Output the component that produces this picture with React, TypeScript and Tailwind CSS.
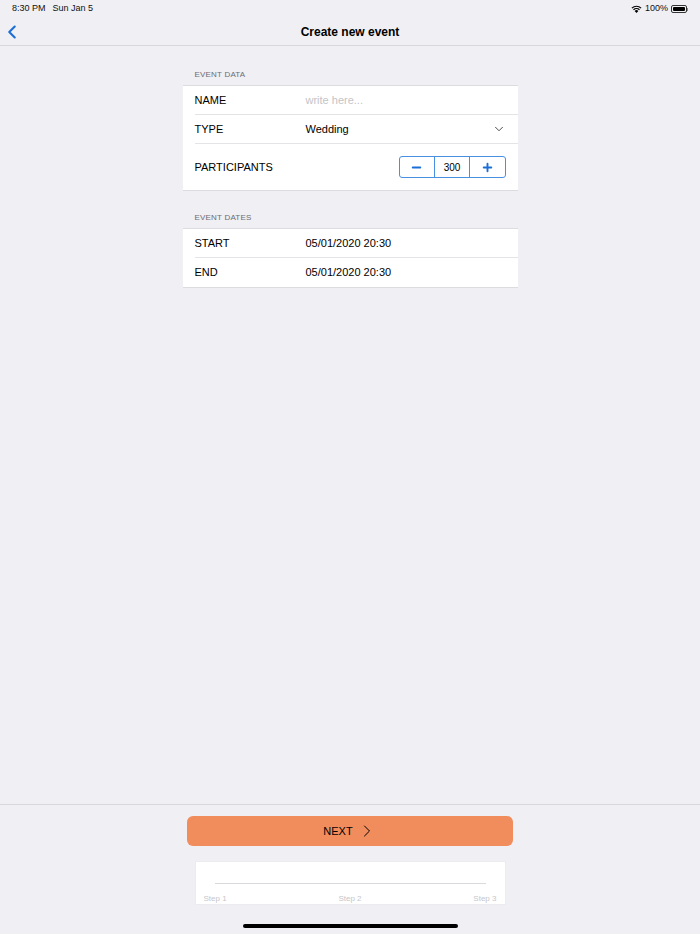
import { ChevronDown, ChevronLeft, ChevronRight, Minus, Plus } from 'lucide-react';

const font = { fontFamily: '"Liberation Sans", Arial, sans-serif' };

function SectionHeader({ title }: { title: string }) {
  return (
    <div className="h-[16px] px-3 pt-[1px] text-[8px] leading-[10px] text-[#6d6d72] tracking-[0.2px]">{title}</div>
  );
}

function Row({ label, children, last, tall }: { label: string; children?: React.ReactNode; last?: boolean; tall?: boolean }) {
  return (
    <div className="pl-3">
      <div className={`flex items-center pr-3 ${tall ? 'h-[46px]' : 'h-[29px]'} ${last ? '' : 'border-b border-[#e3e3e8]'}`}>
        <div className="w-[111px] text-[11px] text-black">{label}</div>
        <div className="flex flex-1 items-center">{children}</div>
      </div>
    </div>
  );
}

function Stepper({ value }: { value: number }) {
  return (
    <div className="ml-auto flex h-[22px] w-[107px] rounded-[3px] border border-[#4a90e2] bg-white">
      <div className="flex flex-1 items-center justify-center border-r border-[#4a90e2]">
        <Minus className="h-[13px] w-[13px] text-[#1b6ed6]" strokeWidth={3.5} />
      </div>
      <div className="flex flex-1 items-center justify-center border-r border-[#4a90e2] text-[10px] text-black">
        {value}
      </div>
      <div className="flex flex-1 items-center justify-center">
        <Plus className="h-[13px] w-[13px] text-[#1b6ed6]" strokeWidth={3.5} />
      </div>
    </div>
  );
}

function StatusBar() {
  return (
    <div className="flex h-[18px] items-center justify-between px-[12px] text-[9px] text-[#111]">
      <div className="flex gap-[7px]">
        <span>8:30 PM</span>
        <span>Sun Jan 5</span>
      </div>
      <div className="flex items-center gap-[3px]">
        <svg width="11" height="8" viewBox="0 0 11 8">
          <path d="M5.5 8 L3.6 5.9 A2.7 2.7 0 0 1 7.4 5.9 Z" fill="black" />
          <path d="M2.5 4.8 A4.3 4.3 0 0 1 8.5 4.8" stroke="black" strokeWidth="1.2" fill="none" />
          <path d="M0.9 3.1 A6.6 6.6 0 0 1 10.1 3.1" stroke="black" strokeWidth="1.2" fill="none" />
        </svg>
        <span>100%</span>
        <div className="flex items-center">
          <div className="h-[8px] w-[16px] rounded-[2px] border border-[#333] p-[1px]">
            <div className="h-full w-full rounded-[1px] bg-black" />
          </div>
          <div className="h-[3px] w-[1px] bg-[#888]" />
        </div>
      </div>
    </div>
  );
}

export default function App() {
  return (
    <div className="flex h-[934px] w-[700px] flex-col bg-[#efeff4]" style={font}>
      <StatusBar />
      <div className="relative flex h-[28px] items-center justify-center border-b border-[#d8d8dc]">
        <ChevronLeft className="absolute left-[1px] top-[3px] h-[22px] w-[22px] text-[#1b6ed6]" strokeWidth={2.3} />
        <span className="text-[12px] font-bold text-black">Create new event</span>
      </div>

      <div className="flex-1">
        <div className="mx-auto w-[335px] pt-[23px]">
          <SectionHeader title="EVENT DATA" />
          <div className="border-y border-[#dcdce0] bg-white">
            <Row label="NAME">
              <span className="text-[11px] text-[#c4c4c7]">write here...</span>
            </Row>
            <Row label="TYPE">
              <span className="text-[11px] text-black">Wedding</span>
              <ChevronDown className="ml-auto h-[14px] w-[14px] text-[#333]" strokeWidth={1.5} />
            </Row>
            <Row label="PARTICIPANTS" last tall>
              <Stepper value={300} />
            </Row>
          </div>

          <div className="pt-[21px]">
            <SectionHeader title="EVENT DATES" />
            <div className="border-y border-[#dcdce0] bg-white">
              <Row label="START">
                <span className="text-[11px] text-black">05/01/2020 20:30</span>
              </Row>
              <Row label="END" last>
                <span className="text-[11px] text-black">05/01/2020 20:30</span>
              </Row>
            </div>
          </div>
        </div>
      </div>

      <div className="flex flex-col items-center border-t border-[#d8d8dc] pt-[11px]">
        <button className="flex h-[30px] w-[326px] items-center justify-center gap-[4px] rounded-[6px] bg-[#f18d5d] text-[11px] text-black">
          <span>NEXT</span>
          <ChevronRight className="h-[20px] w-[20px] text-black" strokeWidth={1.2} />
        </button>
        <div className="mt-[15px] flex h-[44px] w-[311px] flex-col border border-[#ececf0] bg-white px-[8px]">
          <div className="mx-[11px] mt-[21px] h-[1px] bg-[#dadade]" />
          <div className="mt-[10px] flex justify-between text-[8px] leading-[10px] text-[#c6c6ca]">
            <span>Step 1</span>
            <span>Step 2</span>
            <span>Step 3</span>
          </div>
        </div>
        <div className="mb-[6px] mt-[19px] h-[4px] w-[215px] rounded-full bg-black" />
      </div>
    </div>
  );
}
